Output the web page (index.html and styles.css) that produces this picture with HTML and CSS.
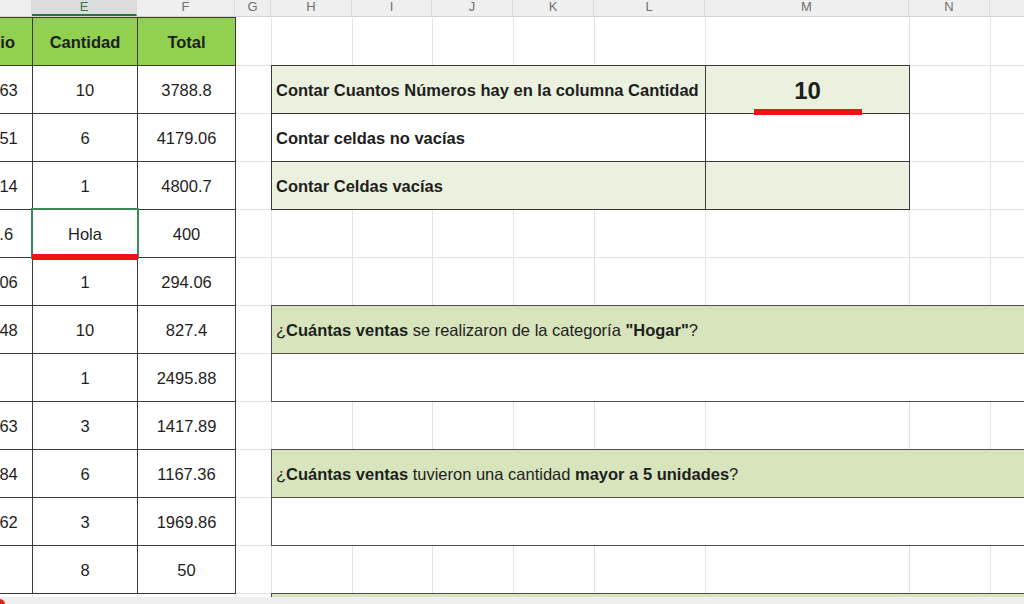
FILE: index.html
```html
<!DOCTYPE html>
<html lang="es">
<head>
<meta charset="utf-8">
<title>Hoja de cálculo</title>
<link rel="stylesheet" href="styles.css">
</head>
<body>
<div class="sheet">
  <div class="colheads">
    <div class="ch">D</div><div class="ch sel">E</div><div class="ch">F</div><div class="ch">G</div>
    <div class="ch">H</div><div class="ch">I</div><div class="ch">J</div><div class="ch">K</div>
    <div class="ch">L</div><div class="ch">M</div><div class="ch">N</div><div class="ch">O</div>
  </div>
  <table class="grid">
    <colgroup>
      <col class="cd"><col class="ce"><col class="cf"><col class="cg"><col class="chh"><col class="ci">
      <col class="cj"><col class="ck"><col class="cl"><col class="cm"><col class="cn"><col class="co">
    </colgroup>
    <tr>
      <td class="t th thd">Precio</td><td class="t th">Cantidad</td><td class="t th">Total</td>
      <td></td><td></td><td></td><td></td><td></td><td></td><td></td><td></td><td></td>
    </tr>
    <tr>
      <td class="t">378.63</td><td class="t">10</td><td class="t">3788.8</td><td></td>
      <td class="bx lt lbl" colspan="5">Contar Cuantos Números hay en la columna Cantidad</td>
      <td class="bx lt big mark">10<span class="redbar bar-m"></span></td>
      <td></td><td></td>
    </tr>
    <tr>
      <td class="t">696.51</td><td class="t">6</td><td class="t">4179.06</td><td></td>
      <td class="bx lbl" colspan="5">Contar celdas no vacías</td>
      <td class="bx"></td>
      <td></td><td></td>
    </tr>
    <tr>
      <td class="t">480.14</td><td class="t">1</td><td class="t">4800.7</td><td></td>
      <td class="bx lt lbl" colspan="5">Contar Celdas vacías</td>
      <td class="bx lt"></td>
      <td></td><td></td>
    </tr>
    <tr>
      <td class="t">125.6</td><td class="t selcell mark">Hola<span class="redbar bar-e"></span></td><td class="t">400</td>
      <td></td><td></td><td></td><td></td><td></td><td></td><td></td><td></td><td></td>
    </tr>
    <tr>
      <td class="t">294.06</td><td class="t">1</td><td class="t">294.06</td>
      <td></td><td></td><td></td><td></td><td></td><td></td><td></td><td></td><td></td>
    </tr>
    <tr>
      <td class="t">127.48</td><td class="t">10</td><td class="t">827.4</td><td></td>
      <td class="qb q" colspan="8">¿<b>Cuántas ventas</b> se realizaron de la categoría <b>"Hogar"</b>?</td>
    </tr>
    <tr>
      <td class="t"></td><td class="t">1</td><td class="t">2495.88</td><td></td>
      <td class="qb" colspan="8"></td>
    </tr>
    <tr>
      <td class="t">472.63</td><td class="t">3</td><td class="t">1417.89</td>
      <td></td><td></td><td></td><td></td><td></td><td></td><td></td><td></td><td></td>
    </tr>
    <tr>
      <td class="t">194.84</td><td class="t">6</td><td class="t">1167.36</td><td></td>
      <td class="qb q" colspan="8">¿<b>Cuántas ventas</b> tuvieron una cantidad <b>mayor a 5 unidades</b>?</td>
    </tr>
    <tr>
      <td class="t">656.62</td><td class="t">3</td><td class="t">1969.86</td><td></td>
      <td class="qb" colspan="8"></td>
    </tr>
    <tr>
      <td class="t"></td><td class="t">8</td><td class="t">50</td>
      <td></td><td></td><td></td><td></td><td></td><td></td><td></td><td></td><td></td>
    </tr>
    <tr>
      <td></td><td></td><td></td><td></td>
      <td class="qb q" colspan="8"></td>
    </tr>
  </table>
</div>
<div class="bottombar"></div>
</body>
</html>
```

FILE: styles.css
```css
html, body {
  margin: 0;
  padding: 0;
}
body {
  width: 1024px;
  height: 604px;
  overflow: hidden;
  background: #ffffff;
  font-family: "Liberation Sans", Arial, sans-serif;
  color: #1e1e1e;
  display: flex;
  flex-direction: column;
}
.sheet {
  flex: none;
  height: 597px;
  overflow: hidden;
}
.colheads {
  display: grid;
  grid-template-columns: 80px 105px 98px 36px 81px 80px 81px 81px 111px 204px 81px 81px;
  height: 17px;
  margin-left: -48px;
  width: 1119px;
  background: #efefef;
  border-bottom: 1px solid #d4d4d4;
  box-sizing: border-box;
}
.ch {
  box-sizing: border-box;
  border-right: 1px solid #dadada;
  text-align: center;
  font-size: 13px;
  line-height: 14px;
  color: #707070;
  overflow: hidden;
}
.ch.sel {
  background: #dcdcdc;
  color: #2f7a4b;
  border-bottom: 2px solid #217346;
}
.grid {
  border-collapse: collapse;
  table-layout: fixed;
  width: 1119px;
  margin-left: -48px;
}
.cd { width: 80px; }
.ce { width: 105px; }
.cf { width: 98px; }
.cg { width: 36px; }
.chh { width: 81px; }
.ci { width: 80px; }
.cj { width: 81px; }
.ck { width: 81px; }
.cl { width: 111px; }
.cm { width: 204px; }
.cn { width: 81px; }
.co { width: 81px; }
.grid col {
  border-right: 1px solid #e3e3e3;
}
.grid tr {
  height: 48px;
  border-bottom: 1px solid #e3e3e3;
}
.grid td {
  padding: 2px 4px 0;
  font-size: 16.5px;
  text-align: center;
  vertical-align: middle;
  white-space: nowrap;
}
.t {
  border: 1px solid #3a3a3a;
}
.th {
  background: #92d050;
  font-weight: bold;
}
.grid td.thd {
  text-align: right;
  padding-right: 17px;
}
.bx {
  border: 1px solid #3a3a3a;
}
.lt {
  background: #ebf1de;
}
.grid td.lbl {
  text-align: left;
  font-weight: bold;
}
.grid td.big {
  font-size: 24px;
  font-weight: bold;
}
.grid td.qb {
  border: 1px solid #4f4f4f;
  text-align: left;
}
.q {
  background: #d8e4bc;
}
.mark {
  position: relative;
}
.redbar {
  position: absolute;
  height: 6px;
  background: #f21212;
  z-index: 2;
}
.bar-m {
  left: 48px;
  width: 108px;
  bottom: -2px;
}
.bar-e {
  left: -1px;
  right: -1px;
  bottom: -3px;
}
.selcell::after {
  content: "";
  position: absolute;
  top: -2px;
  left: -2px;
  right: -2px;
  bottom: -2px;
  border: 2px solid #3b8a58;
  pointer-events: none;
  z-index: 1;
}
.bottombar {
  flex: none;
  height: 7px;
  background: #efefef;
  position: relative;
  overflow: hidden;
}
.bottombar::before {
  content: "";
  position: absolute;
  left: -6px;
  top: 2px;
  width: 11px;
  height: 11px;
  border-radius: 50%;
  background: #e22020;
}
```
